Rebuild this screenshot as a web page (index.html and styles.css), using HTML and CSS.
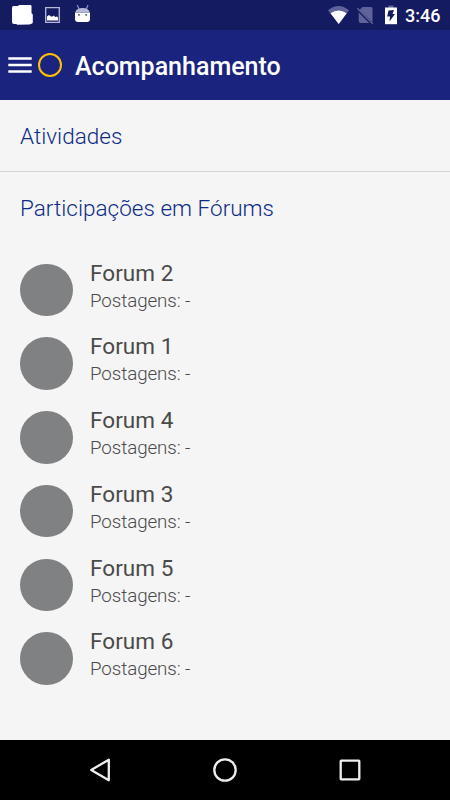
FILE: index.html
```html
<!DOCTYPE html>
<html lang="pt-BR">
<head>
<meta charset="utf-8">
<title>Acompanhamento</title>
<link rel="stylesheet" href="styles.css">
</head>
<body>
<div class="statusbar">
  <svg class="status-left" width="110" height="30" viewBox="0 0 110 30">
    <path fill="#fff" d="M13.500 6H18l1-1h11.500q1 0 1 1v7l1.300 1.500V22q0 1.500-1.300 1.700l-2 .8-12.500.2-.5-.8H14q-2 0-2-2V8q0-2 1.500-2Z"/>
    <path fill="none" stroke="#b7b9d8" stroke-width="1.300" d="M45.700 7.700h13.600v14.600H45.700z"/>
    <path fill="#fff" d="M47 20.500v-4l2-1.500 2 1.500h1.500l1.500-1 1 1.500 2-.5 1 1v3Z"/>
    <path fill="#fff" d="M75 12.500h15V19q0 3-3 3h-9q-3 0-3-3Z"/>
    <path fill="#b7b9d8" d="M75.300 12.500Q76 8 82.500 8t7.200 4.500Z"/>
    <path stroke="#8f92c0" stroke-width="1.200" fill="none" d="m77.300 5 1.700 4m9-4-1.700 4"/>
    <path fill="#62668f" d="M78 14h1.800v1.800H78zm7.300 0h1.800v1.800h-1.800z"/>
  </svg>
  <div class="status-right">
    <svg width="77" height="30" viewBox="0 0 77 30">
      <path fill="#5f6399" d="M0 10.300Q10.500 1.500 21 10.300L10.700 24Z"/>
      <path fill="#fff" d="M2.500 13.200q8-5.500 16.200 0L10.700 24Z"/>
      <path fill="#5f6399" d="m34.500 7-3 3 13 12V8.500Q44.500 7 43 7Zm-3.800 5.500V21q0 2 2 2h8.500Z"/>
      <path stroke="#5f6399" stroke-width="1.400" d="m29.300 8.300 15.500 15.500"/>
      <path fill="#5f6399" d="M60.500 5.500h5V8h-5z"/>
      <path fill="#fff" d="M57 7.500h12v16.700H57z"/>
      <path fill="#151b60" d="m60.500 10.500 5.500-.5-1.500 4h2.500l-5.500 7.500.5-5h-2.800Z"/>
    </svg>
    <span class="clock">3:46</span>
  </div>
</div>
<header class="appbar">
  <svg class="menu" width="24" height="18" viewBox="0 0 24 18"><path fill="#fff" d="M.3 1.300h23.400v2.500H.3zm0 6.500h23.400v2.400H.3zm0 6.400h23.400v2.500H.3z"/></svg>
  <span class="ring"></span>
  <h1 class="title">Acompanhamento</h1>
</header>
<main class="content">
  <h2 class="section bordered">Atividades</h2>
  <h2 class="section">Participações em Fórums</h2>
  <ul class="forums">
    <li class="forum"><span class="avatar"></span><div><div class="name">Forum 2</div><div class="posts">Postagens: -</div></div></li>
    <li class="forum"><span class="avatar"></span><div><div class="name">Forum 1</div><div class="posts">Postagens: -</div></div></li>
    <li class="forum"><span class="avatar"></span><div><div class="name">Forum 4</div><div class="posts">Postagens: -</div></div></li>
    <li class="forum"><span class="avatar"></span><div><div class="name">Forum 3</div><div class="posts">Postagens: -</div></div></li>
    <li class="forum"><span class="avatar"></span><div><div class="name">Forum 5</div><div class="posts">Postagens: -</div></div></li>
    <li class="forum"><span class="avatar"></span><div><div class="name">Forum 6</div><div class="posts">Postagens: -</div></div></li>
  </ul>
</main>
<nav class="navbar">
  <svg width="26" height="26" viewBox="0 0 26 26"><path d="M21.800 2.700v20.600L4.200 13Z"/></svg>
  <svg width="26" height="26" viewBox="0 0 26 26"><circle cx="13" cy="13" r="10.700"/></svg>
  <svg width="26" height="26" viewBox="0 0 26 26"><rect x="3.700" y="3.700" width="18.600" height="18.600" rx=".5"/></svg>
</nav>
</body>
</html>
```
FILE: styles.css
```css
* { box-sizing: border-box; }
body {
  margin: 0;
  height: 800px;
  display: flex;
  flex-direction: column;
  overflow: hidden;
  background: #f5f5f5;
  font-family: Roboto, sans-serif;
}
h1, h2, ul { margin: 0; padding: 0; }
svg { display: block; flex: none; }
.statusbar {
  height: 30px;
  flex: none;
  display: flex;
  justify-content: space-between;
  background: #151b60;
}
.status-right { display: flex; width: 122px; }
.clock {
  color: #fff;
  font-size: 18px;
  font-weight: 500;
  line-height: 31px;
  white-space: nowrap;
}
.appbar {
  height: 70px;
  flex: none;
  display: flex;
  align-items: center;
  padding-left: 8px;
  background: #1a237e;
}
.ring {
  width: 24px;
  height: 24px;
  margin: 0 13px 0 6px;
  border: 2.500px solid #ffc107;
  border-radius: 50%;
}
.title {
  color: #fff;
  font-size: 25px;
  font-weight: 500;
  line-height: 30px;
  padding-top: 3px;
}
.content { flex: 1; }
.section {
  height: 72px;
  padding-left: 20px;
  color: #0d2c86;
  font-size: 22.500px;
  font-weight: 300;
  letter-spacing: 0.02px;
  line-height: 73px;
}
.bordered { border-bottom: 1px solid #d4d4d4; }
.forums { list-style: none; padding: 13px 20px 0; }
.forum {
  display: flex;
  height: 73.750px;
  gap: 17.500px;
}
.avatar {
  width: 52.500px;
  height: 52.500px;
  margin-top: 6.700px;
  border-radius: 50%;
  background: #808183;
}
.name {
  color: #4a4a4a;
  font-size: 22.500px;
  letter-spacing: 0.06px;
  line-height: 30px;
  padding-top: 0.500px;
}
.posts {
  color: #4a4a4a;
  font-size: 18.750px;
  font-weight: 300;
  letter-spacing: -0.080px;
  line-height: 26px;
}
.navbar {
  height: 60px;
  flex: none;
  display: flex;
  justify-content: space-between;
  align-items: center;
  padding: 0 87px;
  background: #000;
  fill: none;
  stroke: #eee;
  stroke-width: 2.300;
  stroke-linejoin: round;
}
```
